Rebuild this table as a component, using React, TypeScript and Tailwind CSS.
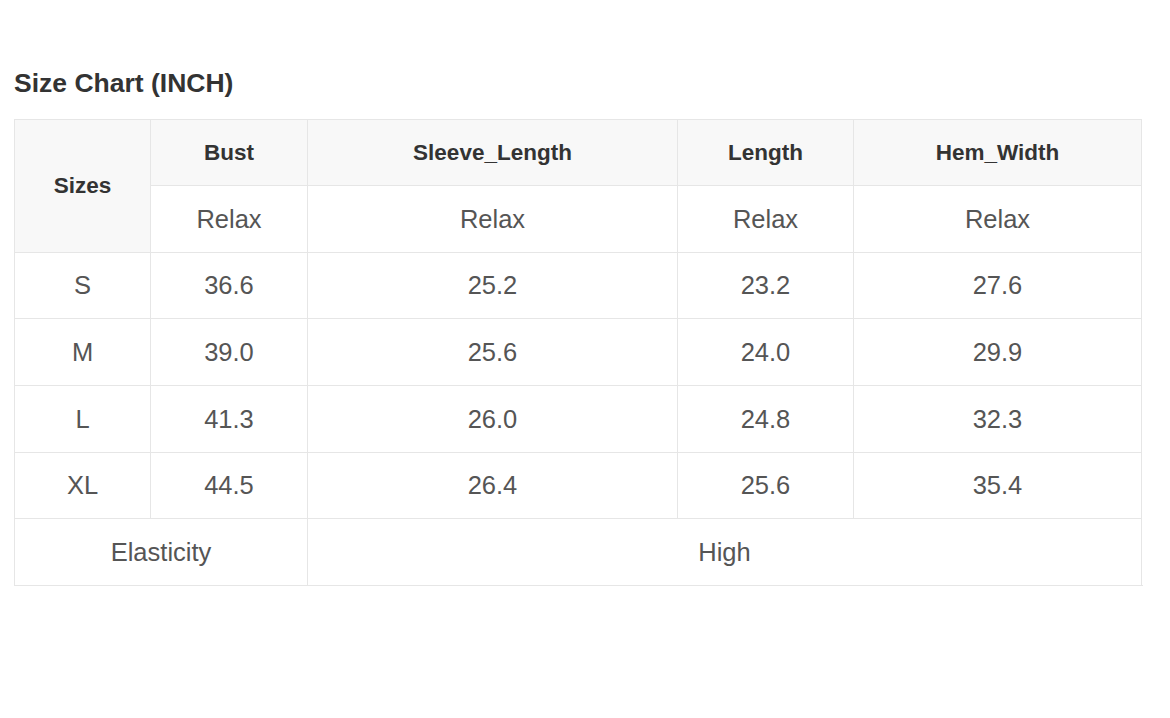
import React from "react";

const columns = [
  { key: "bust", label: "Bust", width: "w-[157px]" },
  { key: "sleeve", label: "Sleeve_Length", width: "w-[370px]" },
  { key: "length", label: "Length", width: "w-[176px]" },
  { key: "hem", label: "Hem_Width", width: "w-[288px]" },
];

const rows = [
  { size: "S", values: ["36.6", "25.2", "23.2", "27.6"], h: "h-[66px]" },
  { size: "M", values: ["39.0", "25.6", "24.0", "29.9"], h: "h-[67px]" },
  { size: "L", values: ["41.3", "26.0", "24.8", "32.3"], h: "h-[67px]" },
  { size: "XL", values: ["44.5", "26.4", "25.6", "35.4"], h: "h-[66px]" },
];

const cell = "border border-[#e6e6e6] text-center align-middle p-0";
const headCell = `${cell} bg-[#f8f8f8] text-[22.5px] font-bold text-[#333]`;
const bodyCell = `${cell} text-[25.5px] text-[#555]`;

export default function App() {
  return (
    <div
      className="w-[1170px] h-[718px] bg-white px-[14px] pt-[68px]"
      style={{ fontFamily: '"Liberation Sans", Arial, sans-serif' }}
    >
      <h1 className="text-[26.5px] leading-[30px] font-bold text-[#333] mb-[21px]">
        Size Chart (INCH)
      </h1>

      <table className="w-[1127px] table-fixed border-collapse border border-[#e6e6e6]">
        <colgroup>
          <col className="w-[136px]" />
          {columns.map((c) => (
            <col key={c.key} className={c.width} />
          ))}
        </colgroup>
        <thead>
          <tr className="h-[66px]">
            <th rowSpan={2} className={headCell}>
              Sizes
            </th>
            {columns.map((c) => (
              <th key={c.key} className={headCell}>
                {c.label}
              </th>
            ))}
          </tr>
          <tr className="h-[67px]">
            {columns.map((c) => (
              <td key={c.key} className={bodyCell}>
                Relax
              </td>
            ))}
          </tr>
        </thead>
        <tbody>
          {rows.map((r) => (
            <tr key={r.size} className={r.h}>
              <td className={bodyCell}>{r.size}</td>
              {r.values.map((v, i) => (
                <td key={i} className={bodyCell}>
                  {v}
                </td>
              ))}
            </tr>
          ))}
          <tr className="h-[67px]">
            <td colSpan={2} className={bodyCell}>
              Elasticity
            </td>
            <td colSpan={4} className={bodyCell}>
              High
            </td>
          </tr>
        </tbody>
      </table>
    </div>
  );
}
